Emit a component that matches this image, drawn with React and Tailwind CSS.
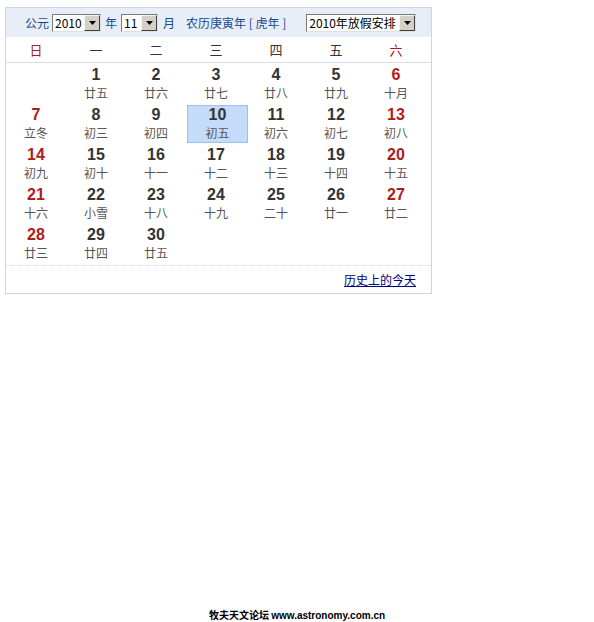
import React from "react";

const cjk = { fontFamily: '"Noto Sans CJK SC", "Noto Sans", sans-serif' };
const num = { fontFamily: '"Liberation Sans", Arial, sans-serif' };

const days = [
  [null, null],
  [1, "廿五"], [2, "廿六"], [3, "廿七"], [4, "廿八"], [5, "廿九"], [6, "十月"],
  [7, "立冬"], [8, "初三"], [9, "初四"], [10, "初五"], [11, "初六"], [12, "初七"], [13, "初八"],
  [14, "初九"], [15, "初十"], [16, "十一"], [17, "十二"], [18, "十三"], [19, "十四"], [20, "十五"],
  [21, "十六"], [22, "小雪"], [23, "十八"], [24, "十九"], [25, "二十"], [26, "廿一"], [27, "廿二"],
  [28, "廿三"], [29, "廿四"], [30, "廿五"],
];

function FakeSelect({ value, width }) {
  return (
    <div
      className="flex items-center h-[18px] bg-white border border-[#7a7a7a] border-r-[#e0e0e0] border-b-[#e0e0e0]"
      style={{ width }}
    >
      <span className="flex-1 pl-[2px] text-[12px] leading-[16px] text-black" style={cjk}>
        {value}
      </span>
      <div className="w-[16px] h-[16px] bg-[#d4d0c8] border border-[#f4f4f4] border-r-[#404040] border-b-[#404040] flex items-center justify-center">
        <svg width="7" height="4" viewBox="0 0 7 4">
          <path d="M0 0h7L3.5 4z" fill="#000" />
        </svg>
      </div>
    </div>
  );
}

export default function App() {
  const weekdays = ["日", "一", "二", "三", "四", "五", "六"];
  return (
    <div className="w-[594px] h-[622px] flex flex-col bg-white pt-[7px] pl-[5px]">
      <div className="w-[427px] border border-[#c9d7e4]">
        <div
          className="h-[29px] bg-[#e8eef8] flex items-center pl-[19px] text-[12px] text-[#184a8a]"
          style={cjk}
        >
          <span>公元</span>
          <div className="ml-[3px]">
            <FakeSelect value="2010" width={49} />
          </div>
          <span className="ml-[4px]">年</span>
          <div className="ml-[4px]">
            <FakeSelect value="11" width={37} />
          </div>
          <span className="ml-[5px]">月</span>
          <span className="ml-[11px]">农历庚寅年 [ 虎年 ]</span>
          <div className="ml-[20px]">
            <FakeSelect value="2010年放假安排" width={110} />
          </div>
        </div>
        <div className="grid grid-cols-[repeat(7,60px)] h-[26px] border-b border-[#d6e0ea] items-center text-[13px]" style={cjk}>
          {weekdays.map((w, i) => (
            <div
              key={w}
              className={`text-center ${i === 0 || i === 6 ? "text-[#a61c1c]" : "text-[#333]"}`}
            >
              {w}
            </div>
          ))}
        </div>
        <div className="grid grid-cols-[repeat(7,60px)] auto-rows-[40px]">
          {days.map(([d, l], idx) => {
            const col = idx % 7;
            const red = col === 0 || col === 6;
            const today = d === 10;
            return (
              <div key={idx} className="flex flex-col">
                {d !== null && (
                  <div
                    className={`flex flex-col items-center ${
                      today
                        ? "mt-[2px] ml-[1px] mr-[-2px] h-[38px] bg-[#c5dbfa] border border-[#9fbde6]"
                        : "mt-[2px] pt-[1px]"
                    }`}
                  >
                    <span
                      className={`text-[16px] font-bold leading-[18px] ${
                        red ? "text-[#b11b1b]" : "text-[#333]"
                      }`}
                      style={num}
                    >
                      {d}
                    </span>
                    <span className="mt-[1px] text-[12px] leading-[16px] text-[#555]" style={cjk}>
                      {l}
                    </span>
                  </div>
                )}
              </div>
            );
          })}
        </div>
        <div className="mt-[2px] border-t border-dotted border-[#cfd7df]" />
        <div className="h-[27px] flex items-center justify-end pr-[15px]">
          <a href="#" className="text-[12px] text-[#000080] underline" style={cjk}>
            历史上的今天
          </a>
        </div>
      </div>
      <div className="mt-auto -ml-[5px] text-center text-[10px] font-bold text-black leading-[12px]" style={cjk}>
        牧夫天文论坛 <span style={num}>www.astronomy.com.cn</span>
      </div>
    </div>
  );
}
